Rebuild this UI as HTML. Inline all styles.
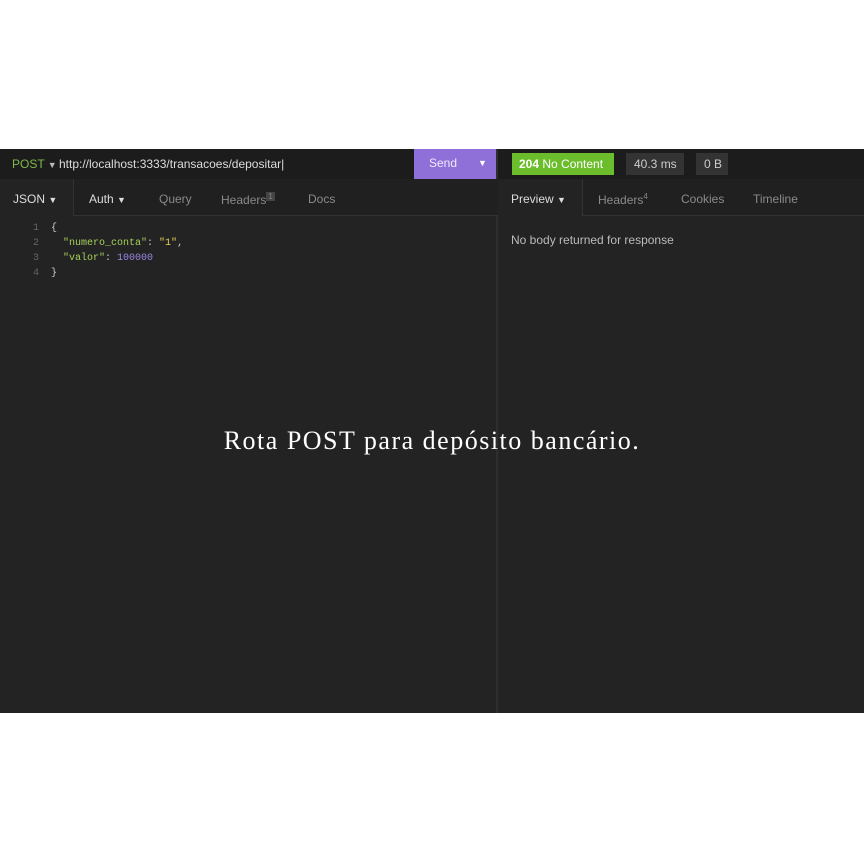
<!DOCTYPE html>
<html><head><style>
body{margin:0;width:864px;height:864px;background:#fff;position:relative;overflow:hidden;font-family:"Liberation Sans",sans-serif;}
.app{position:absolute;left:0;top:149px;width:864px;height:564px;background:#232323;}
.bar{position:absolute;top:0;height:30px;background:#1c1c1c;}
.t{position:absolute;font-size:12px;color:#8a8a8a;white-space:nowrap;}
.mono{font-family:"Liberation Mono",monospace;font-size:10px;position:absolute;white-space:nowrap}
</style></head><body>
<div class="app">
  <div class="bar" style="left:0;width:864px;"></div>
  <div class="t" style="left:12px;top:8px;color:#7fb94a;">POST <span style="color:#bbb;font-size:9px">▼</span></div>
  <div class="t" style="left:59px;top:8px;color:#ddd;">http://localhost:3333/transacoes/depositar|</div>
  <div style="position:absolute;left:414px;top:0;width:82px;height:30px;background:#8f6fd8;"></div>
  <div class="t" style="left:429px;top:7px;color:#f0eaff;">Send</div>
  <div class="t" style="left:478px;top:9px;color:#fff;font-size:9px;">▼</div>
  <div style="position:absolute;left:496px;top:0;width:2px;height:564px;background:#2e2e2e;"></div>
  <div style="position:absolute;left:512px;top:4px;width:102px;height:22px;background:#6bbd2b;"></div>
  <div class="t" style="left:519px;top:8px;color:#fff;"><b>204</b> No Content</div>
  <div style="position:absolute;left:626px;top:4px;width:58px;height:22px;background:#333;"></div>
  <div class="t" style="left:634px;top:8px;color:#ccc;">40.3 ms</div>
  <div style="position:absolute;left:696px;top:4px;width:32px;height:22px;background:#333;"></div>
  <div class="t" style="left:704px;top:8px;color:#ccc;">0 B</div>
  <div style="position:absolute;left:0;top:30px;width:864px;height:36px;background:#202020;border-bottom:1px solid #333;"></div>
  <div style="position:absolute;left:0;top:30px;width:73px;height:37px;background:#232323;border-right:1px solid #333;"></div>
  <div style="position:absolute;left:498px;top:30px;width:84px;height:37px;background:#232323;border-right:1px solid #333;"></div>
  <div class="t" style="left:13px;top:43px;color:#ddd;">JSON <span style="font-size:9px">▼</span></div>
  <div class="t" style="left:89px;top:43px;color:#ddd;">Auth <span style="font-size:9px">▼</span></div>
  <div class="t" style="left:159px;top:43px;">Query</div>
  <div class="t" style="left:221px;top:43px;">Headers<sup style="font-size:8px;background:#444;padding:0 2px">1</sup></div>
  <div class="t" style="left:308px;top:43px;">Docs</div>
  <div class="t" style="left:511px;top:43px;color:#ddd;">Preview <span style="font-size:9px">▼</span></div>
  <div class="t" style="left:598px;top:43px;">Headers<sup style="font-size:8px">4</sup></div>
  <div class="t" style="left:681px;top:43px;">Cookies</div>
  <div class="t" style="left:753px;top:43px;">Timeline</div>
  <div class="t" style="left:511px;top:84px;color:#bbb;">No body returned for response</div>
  <div class="mono" style="left:33px;top:72px;color:#666;line-height:15px;">1<br>2<br>3<br>4</div>
  <div class="mono" style="left:51px;top:72px;color:#ccc;line-height:15px;">{<br>&nbsp;&nbsp;<span style="color:#a6d25a">"numero_conta"</span>: <span style="color:#e6d25a">"1"</span>,<br>&nbsp;&nbsp;<span style="color:#a6d25a">"valor"</span>: <span style="color:#9d86e6">100000</span><br>}</div>
</div>
<div style="position:absolute;left:0;top:426px;width:864px;text-align:center;font-family:'Liberation Serif',serif;font-size:26px;letter-spacing:1.5px;color:#fff;">Rota POST para depósito bancário.</div>
</body></html>
